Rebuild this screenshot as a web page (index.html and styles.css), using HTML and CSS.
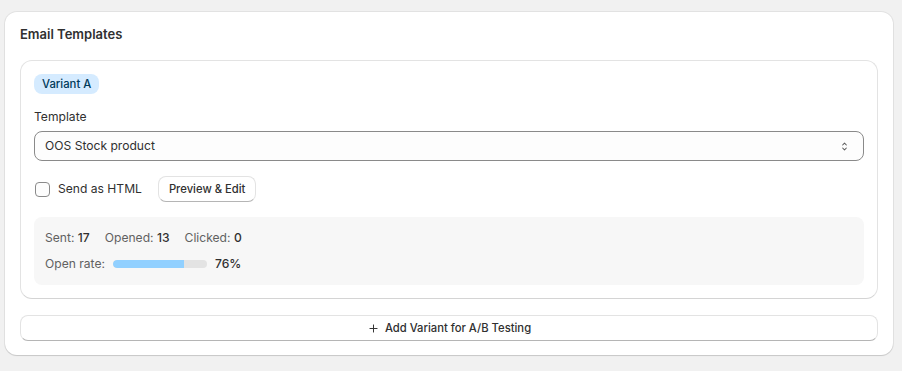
FILE: index.html
```html
<!DOCTYPE html>
<html lang="en">
<head>
<meta charset="utf-8">
<title>Email Templates</title>
<link rel="stylesheet" href="styles.css">
</head>
<body>
<div class="page">
  <section class="card">
    <h2 class="card-title">Email Templates</h2>
    <div class="variant">
      <span class="badge">Variant A</span>
      <label class="field-label" for="tpl">Template</label>
      <div class="select">
        <span class="select-value">OOS Stock product</span>
        <svg class="select-icon" viewBox="0 0 20 20" width="15" height="15" aria-hidden="true">
          <path d="M7.5 8l2.5-2.5 2.5 2.5M7.5 12l2.5 2.5 2.5-2.5" fill="none" stroke="#5c5c5c" stroke-width="1.4" stroke-linecap="round" stroke-linejoin="round"/>
        </svg>
      </div>
      <div class="options-row">
        <label class="checkbox">
          <span class="box"></span>
          <span>Send as HTML</span>
        </label>
        <button class="btn">Preview &amp; Edit</button>
      </div>
      <div class="stats">
        <div class="stats-row">
          <span class="stat">Sent: <b>17</b></span>
          <span class="stat">Opened: <b>13</b></span>
          <span class="stat">Clicked: <b>0</b></span>
        </div>
        <div class="stats-row rate">
          <span class="stat">Open rate:</span>
          <span class="bar"><span class="bar-fill" style="width:76%"></span></span>
          <b class="pct">76%</b>
        </div>
      </div>
    </div>
    <button class="btn btn-full">
      <svg viewBox="0 0 20 20" width="13" height="13" aria-hidden="true">
        <path d="M10 4.5v11M4.5 10h11" fill="none" stroke="#303030" stroke-width="1.5" stroke-linecap="round"/>
      </svg>
      <span>Add Variant for A/B Testing</span>
    </button>
  </section>
</div>
</body>
</html>
```

FILE: styles.css
```css
* { box-sizing: border-box; }
html, body { margin: 0; padding: 0; }
body {
  background: #f1f1f1;
  font-family: Inter, "Noto Sans", "Liberation Sans", sans-serif;
  font-size: 12.1px;
  line-height: 20px;
  color: #303030;
}
.page {
  padding: 12px 9px 16px 5px;
}
.card {
  background: #ffffff;
  border-radius: 12px;
  padding: 12px 15px 14px 15px;
  box-shadow: 0 0 0 1px rgba(0,0,0,0.06), 0 1px 1px rgba(0,0,0,0.12);
}
.card-title {
  margin: 0 0 16px 0;
  font-size: 13px;
  line-height: 20px;
  font-weight: 600;
  color: #303030;
}
.variant {
  border: 1px solid #e3e3e3;
  border-bottom-color: #d4d4d4;
  border-radius: 12px;
  padding: 13px;
  display: flex;
  flex-direction: column;
  align-items: flex-start;
}
.badge {
  display: inline-block;
  background: #d5ebff;
  color: #003a5a;
  font-size: 11.3px;
  line-height: 20px;
  padding: 0 8px;
  border-radius: 8px;
  font-weight: 450;
}
.field-label {
  margin-top: 13px;
  margin-bottom: 4px;
  color: #303030;
}
.select {
  width: 100%;
  height: 30px;
  border: 1px solid #8a8a8a;
  border-radius: 8px;
  background: #fdfdfd;
  display: flex;
  align-items: center;
  justify-content: space-between;
  padding: 0 11px 0 10px;
  color: #303030;
}
.select-icon { display: block; }
.options-row {
  margin-top: 15px;
  display: flex;
  align-items: center;
  gap: 16px;
}
.checkbox {
  display: flex;
  align-items: center;
  gap: 8px;
  padding-left: 1px;
  color: #303030;
}
.box {
  width: 15px;
  height: 15px;
  border: 1px solid #8a8a8a;
  border-radius: 4px;
  background: #fdfdfd;
}
.btn {
  font-family: inherit;
  font-size: 11.25px;
  font-weight: 550;
  line-height: 16px;
  color: #303030;
  background: #ffffff;
  border: 1px solid #e3e3e3;
  border-bottom-color: #b5b5b5;
  border-radius: 8px;
  height: 26px;
  padding: 0 10px;
  display: inline-flex;
  align-items: center;
  justify-content: center;
  gap: 5px;
  cursor: pointer;
}
.stats {
  margin-top: 15px;
  width: 100%;
  background: #f7f7f7;
  border-radius: 8px;
  padding: 11px;
  display: flex;
  flex-direction: column;
  gap: 6px;
}
.stats-row {
  display: flex;
  align-items: center;
  gap: 15px;
}
.stats-row.rate { gap: 8px; }
.stat { color: #616161; }
.stat b, .pct { color: #303030; font-weight: 550; }
.bar {
  width: 94px;
  height: 8px;
  border-radius: 4px;
  background: #e3e3e3;
  overflow: hidden;
  display: block;
}
.bar-fill {
  display: block;
  height: 100%;
  background: #91d0ff;
  border-radius: 4px 0 0 4px;
}
.btn-full {
  width: 100%;
  margin-top: 16px;
}
```
